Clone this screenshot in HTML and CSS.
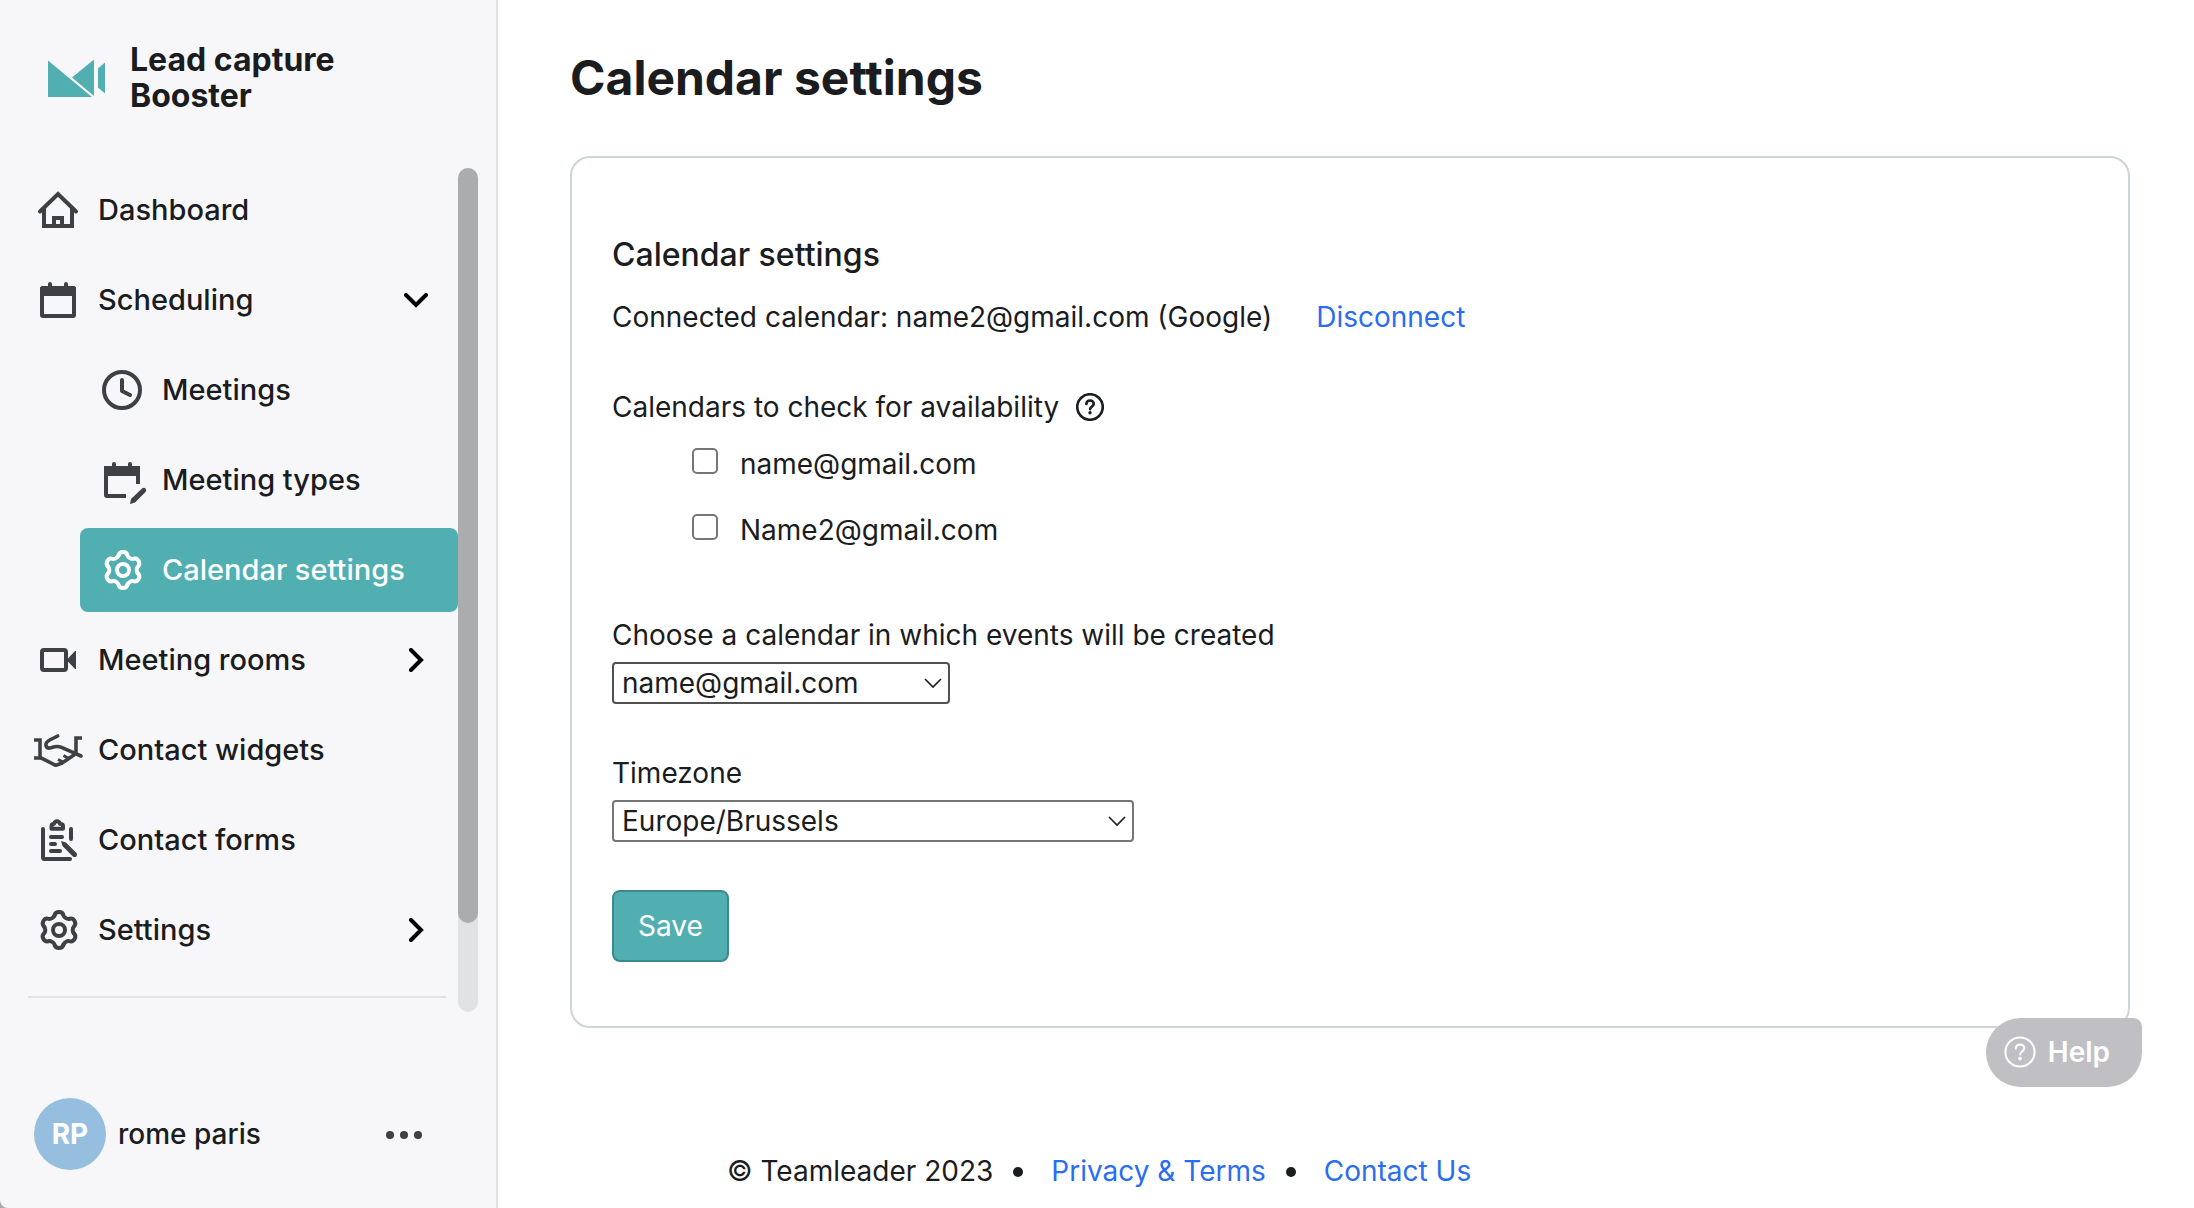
FILE: index.html
```html
<!DOCTYPE html>
<html lang="en">
<head>
  <meta charset="UTF-8">
  <meta name="viewport" content="width=device-width, initial-scale=1.0">
  <title>Calendar settings</title>
  <link rel="stylesheet" href="styles.css">
</head>
<body>
  <!-- shared icons -->
  <svg class="sprite" aria-hidden="true">
    <symbol id="gear" viewBox="0 0 48 48">
      <g transform="translate(25 24)" fill="none" stroke="currentColor" stroke-width="4" stroke-linecap="round">
        <path id="tooth" d="M-4.5 -14.5C-4 -17 -3 -18 0 -18S4 -17 4.5 -14.5C5 -12.5 8.3 -10.6 10.3 -11.2"/>
        <use href="#tooth" transform="rotate(60)"/>
        <use href="#tooth" transform="rotate(120)"/>
        <use href="#tooth" transform="rotate(180)"/>
        <use href="#tooth" transform="rotate(240)"/>
        <use href="#tooth" transform="rotate(300)"/>
        <circle r="6"/>
      </g>
    </symbol>
    <symbol id="chevron" viewBox="0 0 24 24">
      <path d="M7 2l10 10L7 22" fill="none" stroke="currentColor" stroke-width="4" stroke-linecap="round"/>
    </symbol>
    <symbol id="question" viewBox="0 0 32 32">
      <g fill="none" stroke="currentColor" stroke-linecap="round">
        <circle cx="16" cy="16" r="14.6"/>
        <path d="M11.8 12.6c.2-2.6 2-4 4.3-4s4.200 1.500 4.200 3.700c0 3-4 3.100-4.200 6.200"/>
      </g>
      <circle cx="16" cy="22.600" r="1.900" fill="currentColor"/>
    </symbol>
  </svg>

  <div class="app">
    <aside class="sidebar">
      <div class="brand">
        <svg class="brand-logo" viewBox="0 0 57 38" fill="#51afb1">
          <path d="M0 1.500V38h44z"/>
          <path d="M24 18.500L46 .5V37z"/>
          <path d="M50 9.500l7-6v31l-7-6z"/>
        </svg>
        <span class="brand-name">Lead capture Booster</span>
      </div>

      <div class="nav-scroll">
        <nav class="nav">
          <a class="nav-item" href="#">
            <svg class="icon" viewBox="0 0 48 48" fill="none" stroke="currentColor" stroke-width="4">
              <path d="M6 25.500L24 8l18 17.500" stroke-linecap="round"/>
              <path d="M10 22v18h28V22M20 40v-8h8v8"/>
            </svg>
            Dashboard
          </a>
          <a class="nav-item" href="#">
            <svg class="icon" viewBox="0 0 48 48" fill="none" stroke="currentColor" stroke-width="4">
              <rect x="8" y="12" width="32" height="28" rx="1"/>
              <path d="M6 20v-7q0-3 3-3h30q3 0 3 3v7z" fill="currentColor" stroke="none"/>
              <path d="M16 8v4M32 8v4" stroke-linecap="round"/>
            </svg>
            Scheduling
            <svg class="chevron chevron-down"><use href="#chevron"/></svg>
          </a>
          <a class="nav-item sub" href="#">
            <svg class="icon" viewBox="0 0 48 48" fill="none" stroke="currentColor" stroke-width="4" stroke-linecap="round" stroke-linejoin="round">
              <circle cx="24" cy="24" r="18"/>
              <path d="M24 14v11l8 4"/>
            </svg>
            Meetings
          </a>
          <a class="nav-item sub" href="#">
            <svg class="icon" viewBox="0 0 48 48" fill="none" stroke="currentColor" stroke-width="4">
              <path d="M28 40H9q-1 0-1-1V12h32v16"/>
              <path d="M6 20v-7q0-3 3-3h30q3 0 3 3v7z" fill="currentColor" stroke="none"/>
              <path d="M16 8v4M32 8v4" stroke-linecap="round"/>
              <path d="M32 48l1-5L44 32.500q2-1.500 3.500 0t0 3.500L37 46.500z" fill="currentColor" stroke="none"/>
            </svg>
            Meeting types
          </a>
          <a class="nav-item sub active" href="#" aria-current="page">
            <svg class="icon"><use href="#gear"/></svg>
            Calendar settings
          </a>
          <a class="nav-item" href="#">
            <svg class="icon" viewBox="0 0 48 48" fill="none" stroke="currentColor" stroke-width="4">
              <rect x="8" y="14" width="24" height="20" rx="2"/>
              <path d="M34 22.500L41 15h1v18h-1l-7-7.500z" fill="currentColor" stroke="none"/>
            </svg>
            Meeting rooms
            <svg class="chevron"><use href="#chevron"/></svg>
          </a>
          <a class="nav-item" href="#">
            <svg class="icon" viewBox="0 0 48 48" fill="none" stroke="currentColor" stroke-width="3.6" stroke-linejoin="round">
              <path d="M0 14h6v18H0M48 12h-6v15" stroke-linejoin="miter"/>
              <path d="M23.700 10l-8 4c-3 1.600-4.200 3.700-3.700 5.800.6 2.200 2.400 2.700 5 2l3.500-1c2.500-.7 4.500-.5 7 .6L47 30" stroke-linecap="round"/>
              <path d="M6 31.300l15.700 8 6-2L41 28.300"/>
              <path d="M24 33.500l6 3M29.500 29.500l6 3.500" stroke-width="3"/>
            </svg>
            Contact widgets
          </a>
          <a class="nav-item" href="#">
            <svg class="icon" viewBox="0 0 48 48" fill="none" stroke="currentColor" stroke-width="4" stroke-linecap="round">
              <path d="M9 13v28.500q0 1.500 1.500 1.500H36M37 13v10"/>
              <path d="M17.500 12.700V10q0-2 2.500-2.200 1-2.500 3-2.500t3 2.500q3 .2 3 2.200v2.700z" stroke-linejoin="round"/>
              <path d="M17 21h11M17 28h4M17 35h9"/>
              <path d="M27 25l5 1.500L42.500 37q1.200 1.600 0 3.200t-3.700.2L28.500 30z" fill="currentColor" stroke="none"/>
            </svg>
            Contact forms
          </a>
          <a class="nav-item" href="#">
            <svg class="icon"><use href="#gear"/></svg>
            Settings
            <svg class="chevron"><use href="#chevron"/></svg>
          </a>
          <hr class="nav-divider">
        </nav>
        <div class="scroll-track"><div class="scroll-thumb"></div></div>
      </div>

      <div class="user">
        <span class="avatar">RP</span>
        <span class="user-name">rome paris</span>
        <button class="user-menu" type="button" aria-label="User menu">
          <svg viewBox="0 0 36 8" fill="currentColor"><circle cx="4" cy="4" r="4"/><circle cx="18" cy="4" r="4"/><circle cx="32" cy="4" r="4"/></svg>
        </button>
      </div>
    </aside>

    <main class="main">
      <h1>Calendar settings</h1>
      <form class="card">
        <h2>Calendar settings</h2>
        <p class="connected">
          <span>Connected calendar: name2@gmail.com (Google)</span>
          <a href="#">Disconnect</a>
        </p>

        <div class="availability">
          <span>Calendars to check for availability</span>
          <svg class="hint"><use href="#question"/></svg>
        </div>
        <div class="checks">
          <label class="check"><input type="checkbox"><span>name@gmail.com</span></label>
          <label class="check"><input type="checkbox"><span>Name2@gmail.com</span></label>
        </div>

        <div class="field">
          <label for="calendar">Choose a calendar in which events will be created</label>
          <select id="calendar" class="select-calendar">
            <option>name@gmail.com</option>
            <option>Name2@gmail.com</option>
          </select>
        </div>
        <div class="field">
          <label for="timezone">Timezone</label>
          <select id="timezone" class="select-timezone">
            <option>Europe/Brussels</option>
          </select>
        </div>
        <button class="save" type="submit">Save</button>
      </form>

      <footer class="footer">
        <span>© Teamleader 2023</span>
        <span class="dot"></span>
        <a href="#">Privacy &amp; Terms</a>
        <span class="dot"></span>
        <a href="#">Contact Us</a>
      </footer>
    </main>
  </div>

  <button class="help" type="button">
    <svg class="help-icon"><use href="#question"/></svg>
    Help
  </button>
</body>
</html>
```

FILE: styles.css
```css
* { box-sizing: border-box; }
body { margin: 0; font-family: Inter, "Liberation Sans", sans-serif; font-size: 28px; line-height: 40px; color: #1a1c20; background: #fff; }
h1, h2, p { margin: 0; }
a { color: #2a6df0; text-decoration: none; }
button, select, input { font: inherit; color: inherit; margin: 0; }
.sprite { position: absolute; width: 0; height: 0; }

.app { display: flex; min-height: 100vh; background: #aaa; }

/* sidebar */
.sidebar { width: 498px; flex-shrink: 0; display: flex; flex-direction: column; background: #f7f7fa; border-right: 2px solid #e1e2e4; border-bottom-left-radius: 8px; font-weight: 500; }
.brand { display: flex; align-items: center; gap: 25px; height: 168px; padding: 0 120px 12px 48px; }
.brand-logo { width: 57px; height: 38px; flex-shrink: 0; }
.brand-name { font-size: 32px; line-height: 36px; font-weight: 700; }

.nav-scroll { display: flex; flex: 1; padding-right: 18px; }
.nav { flex: 1; display: flex; flex-direction: column; gap: 6px; padding-left: 16px; font-size: 29px; }
.nav-item { display: flex; align-items: center; gap: 16px; height: 84px; padding: 0 30px 0 18px; border-radius: 8px; color: #1a1c20; white-space: nowrap; }
.nav-item.sub { margin-left: 64px; }
.nav-item.active { background: #51afb1; color: #fff; }
.icon { width: 48px; height: 48px; flex-shrink: 0; color: #3e4044; overflow: visible; }
.active .icon { color: #fff; }
.chevron { width: 24px; height: 24px; margin-left: auto; color: #000; }
.chevron-down { transform: rotate(90deg); }
.nav-divider { margin: 18px 12px 0; border: 0; border-top: 2px solid #e1e2e4; }
.scroll-track { width: 20px; border-radius: 10px; background: #e1e2e4; }
.scroll-thumb { height: 755px; border-radius: 10px; background: #abacae; }

.user { display: flex; align-items: center; gap: 12px; padding: 86px 74px 38px 34px; }
.avatar { width: 72px; height: 72px; border-radius: 50%; background: #96bedf; color: #fff; line-height: 72px; text-align: center; font-weight: 700; }
.user-menu { width: 36px; margin-left: auto; padding: 0; border: 0; background: none; color: #3e4044; line-height: 0; cursor: pointer; }

/* content */
.main { flex: 1; padding: 48px 64px 16px 72px; background: #fff; }
h1 { font-size: 48px; line-height: 60px; font-weight: 700; }
.card { margin-top: 48px; padding: 77px 40px 64px; border: 2px solid #ced5d8; border-radius: 20px; }
h2 { font-size: 32px; line-height: 40px; font-weight: 500; }
.connected { display: flex; gap: 44px; margin-top: 22px; }
.availability { display: flex; align-items: center; gap: 17px; margin-top: 50px; }
.hint { width: 28px; height: 28px; stroke-width: 3; }
.checks { display: flex; flex-direction: column; gap: 26px; margin: 17px 0 0 80px; }
.check { display: flex; align-items: flex-start; gap: 22px; }
.check input { appearance: none; width: 26px; height: 26px; margin-top: 4px; border: 2px solid #767676; border-radius: 5px; background: #fff; }

.field { display: flex; flex-direction: column; align-items: flex-start; gap: 7px; margin-bottom: 48px; }
.checks + .field { margin: 65px 0 49px; }
select { appearance: none; height: 42px; padding: 0 36px 0 8px; border: 2px solid #767676; border-radius: 4px; line-height: 38px; background: #fff url("data:image/svg+xml,%3Csvg xmlns='http://www.w3.org/2000/svg' width='18' height='11'%3E%3Cpath d='M1 1l8 8 8-8' fill='none' stroke='%231a1c20' stroke-width='1.6'/%3E%3C/svg%3E") no-repeat right 6px center; }
.select-calendar { width: 338px; border-color: #505153; }
.select-timezone { width: 522px; }
.save { display: block; height: 72px; padding: 0 24px; border: 2px solid #3c8a8d; border-radius: 8px; background: #51afb1; color: #fff; cursor: pointer; }

.footer { display: flex; align-items: center; margin-top: 123px; padding-left: 157px; }
.dot { width: 10px; height: 10px; margin: 2px 28px 0 20px; border-radius: 50%; background: #1a1c20; }

/* floating help button */
.help { position: fixed; right: 52px; bottom: 121px; display: flex; align-items: center; gap: 12px; height: 69px; padding: 0 32px 2px 18px; border: 0; border-radius: 36px 9px 36px 36px; background: #c0bfc4; color: #fff; font-weight: 600; cursor: pointer; }
.help-icon { width: 32px; height: 32px; stroke-width: 2; }
```
